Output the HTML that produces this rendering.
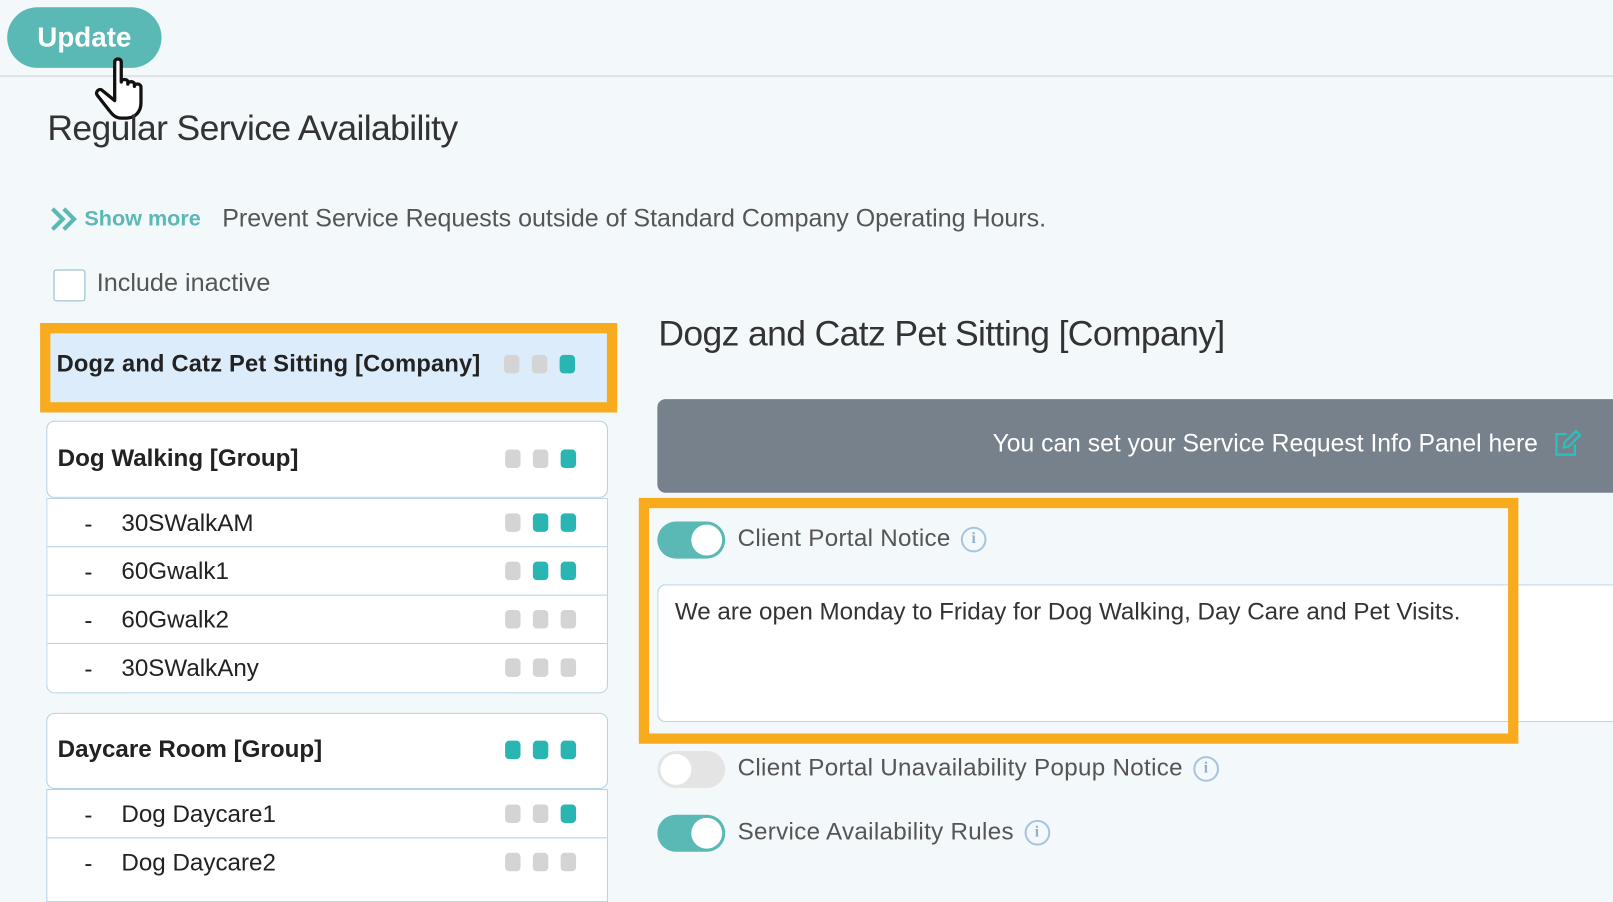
<!DOCTYPE html>
<html><head><meta charset="utf-8"><style>
*{box-sizing:border-box;margin:0;padding:0}
html,body{width:1613px;height:871px;overflow:hidden;background:#f3f8fb}
body{font-family:"Liberation Sans",sans-serif;color:#333}
#w{position:absolute;left:0;top:0;width:1568px;height:847px;transform:scale(1.0287);transform-origin:0 0}
.a{position:absolute;white-space:nowrap}
.dots{position:absolute;right:30px;display:flex;gap:12px}
.dots i{display:block;width:15px;height:18px;border-radius:4px;background:#d4d4d4}
.dots i.t{background:#29b6b3}
.row{position:absolute;left:0;right:0;height:47px;border-top:1px solid #b5d0e5;font-size:23.5px;color:#222}
.row .d{position:absolute;left:36px;top:11px}
.row .n{position:absolute;left:72px;top:10px}
.row .dots{top:14px}
.tg{position:absolute;width:66px;height:36px;border-radius:18px;background:#5ab8b5}
.tg::after{content:"";position:absolute;right:3px;top:3px;width:30px;height:30px;border-radius:50%;background:#fff}
.tg.off{background:#e4e4e4}.tg.off::after{right:auto;left:3px}
.lbl{position:absolute;font-size:23.5px;color:#555;letter-spacing:.3px}
.info{display:inline-block;width:25px;height:25px;border:2px solid #a8c4de;border-radius:50%;color:#8fb0d2;font-size:15px;text-align:center;line-height:21px;vertical-align:middle;margin-left:10px;font-family:"Liberation Serif",serif;font-weight:bold}
</style></head><body><div id="w">
<div class="a" style="left:7px;top:7px;width:150px;height:59px;border-radius:30px;background:#5ab8b5;color:#fff;font-size:27px;font-weight:bold;text-align:center;line-height:59px">Update</div>
<div class="a" style="left:0;top:73px;width:1568px;height:2px;background:#e0e3e6"></div>
<svg class="a" style="left:90px;top:52px" width="60" height="66" viewBox="0 0 56 62"><path d="M20 8c0-4 6-4 6 0v18c0-3 6-3 6 0v2c0-3 6-3 6 0v2c0-3 6-3 6 1v14c0 8-5 14-14 14h-4c-5 0-8-3-11-7L4 38c-2-3 2-7 5-4l11 9z" fill="#fff" stroke="#111" stroke-width="3" stroke-linejoin="round"/></svg>
<div class="a" style="left:46px;top:106px;font-size:34.5px;color:#333;letter-spacing:-0.6px">Regular Service Availability</div>
<svg class="a" style="left:48px;top:201px" width="28" height="24" viewBox="0 0 28 24" fill="none" stroke="#5ab8b5" stroke-width="4"><path d="M3 2l10 10L3 22M14 2l10 10-10 10"/></svg>
<div class="a" style="left:82px;top:201px;font-size:21px;color:#5ab8b5;font-weight:bold">Show more</div>
<div class="a" style="left:216px;top:199px;font-size:24.3px;color:#555">Prevent Service Requests outside of Standard Company Operating Hours.</div>
<div class="a" style="left:52px;top:262px;width:31px;height:31px;border:1.5px solid #8ab9c8;border-radius:3px;background:#fff"></div>
<div class="a" style="left:94px;top:262px;font-size:24.5px;color:#555">Include inactive</div>

<div class="a" style="left:39px;top:314px;width:561px;height:87px;border:10px solid #f9ab1e;background:#dcecfb">
 <div class="a" style="left:6px;top:16px;font-size:23px;font-weight:bold;color:#222;letter-spacing:.2px">Dogz and Catz Pet Sitting [Company]</div>
 <div class="dots" style="top:21px;right:31px"><i></i><i></i><i class="t"></i></div>
</div>

<div class="a" style="left:45px;top:409px;width:546px;height:75px;border:1px solid #b5d0e5;border-radius:8px;background:#fff">
 <div class="a" style="left:10px;top:22px;font-size:23.5px;font-weight:bold;color:#222">Dog Walking [Group]</div>
 <div class="dots" style="top:27px"><i></i><i></i><i class="t"></i></div>
</div>
<div class="a" style="left:45px;top:484px;width:546px;height:190px;border:1px solid #b5d0e5;border-top:none;border-radius:0 0 8px 8px;background:#fff;overflow:hidden">
 <div class="row" style="top:0"><span class="d">-</span><span class="n">30SWalkAM</span><div class="dots"><i></i><i class="t"></i><i class="t"></i></div></div>
 <div class="row" style="top:47px"><span class="d">-</span><span class="n">60Gwalk1</span><div class="dots"><i></i><i class="t"></i><i class="t"></i></div></div>
 <div class="row" style="top:94px"><span class="d">-</span><span class="n">60Gwalk2</span><div class="dots"><i></i><i></i><i></i></div></div>
 <div class="row" style="top:141px"><span class="d">-</span><span class="n">30SWalkAny</span><div class="dots"><i></i><i></i><i></i></div></div>
</div>

<div class="a" style="left:45px;top:693px;width:546px;height:74px;border:1px solid #b5d0e5;border-radius:8px;background:#fff">
 <div class="a" style="left:10px;top:21px;font-size:23.5px;font-weight:bold;color:#222">Daycare Room [Group]</div>
 <div class="dots" style="top:26px"><i class="t"></i><i class="t"></i><i class="t"></i></div>
</div>
<div class="a" style="left:45px;top:767px;width:546px;height:110px;border:1px solid #b5d0e5;border-top:none;background:#fff;overflow:hidden">
 <div class="row" style="top:0"><span class="d">-</span><span class="n">Dog Daycare1</span><div class="dots"><i></i><i></i><i class="t"></i></div></div>
 <div class="row" style="top:47px"><span class="d">-</span><span class="n">Dog Daycare2</span><div class="dots"><i></i><i></i><i></i></div></div>
</div>

<div class="a" style="left:640px;top:306px;font-size:34.5px;color:#333;letter-spacing:-0.6px">Dogz and Catz Pet Sitting [Company]</div>
<div class="a" style="left:639px;top:388px;width:980px;height:91px;border-radius:8px;background:#77818c">
 <div class="a" style="right:124px;top:30px;font-size:24px;color:#fff">You can set your Service Request Info Panel here</div>
 <svg class="a" style="left:870px;top:29px" width="28" height="28" viewBox="0 0 28 28" fill="none" stroke="#29c0bd" stroke-width="2.2"><path d="M14 5H4v20h18V15"/><path d="M11 18l1-5L23 2l4 4-11 11z"/></svg>
</div>
<div class="tg" style="left:639px;top:507px"></div>
<div class="lbl" style="left:717px;top:510px">Client Portal Notice<span class="info">i</span></div>
<div class="a" style="left:639px;top:568px;width:980px;height:134px;border:1px solid #b5d0e5;border-radius:8px;background:#fff;border-right:none">
 <div class="a" style="left:16px;top:12px;font-size:23.5px;color:#333">We are open Monday to Friday for Dog Walking, Day Care and Pet Visits.</div>
</div>
<div class="a" style="left:621px;top:484px;width:855px;height:239px;border:10px solid #f9ab1e;background:transparent"></div>
<div class="tg off" style="left:639px;top:730px"></div>
<div class="lbl" style="left:717px;top:733px">Client Portal Unavailability Popup Notice<span class="info">i</span></div>
<div class="tg" style="left:639px;top:792px"></div>
<div class="lbl" style="left:717px;top:795px">Service Availability Rules<span class="info">i</span></div>
</div></body></html>
